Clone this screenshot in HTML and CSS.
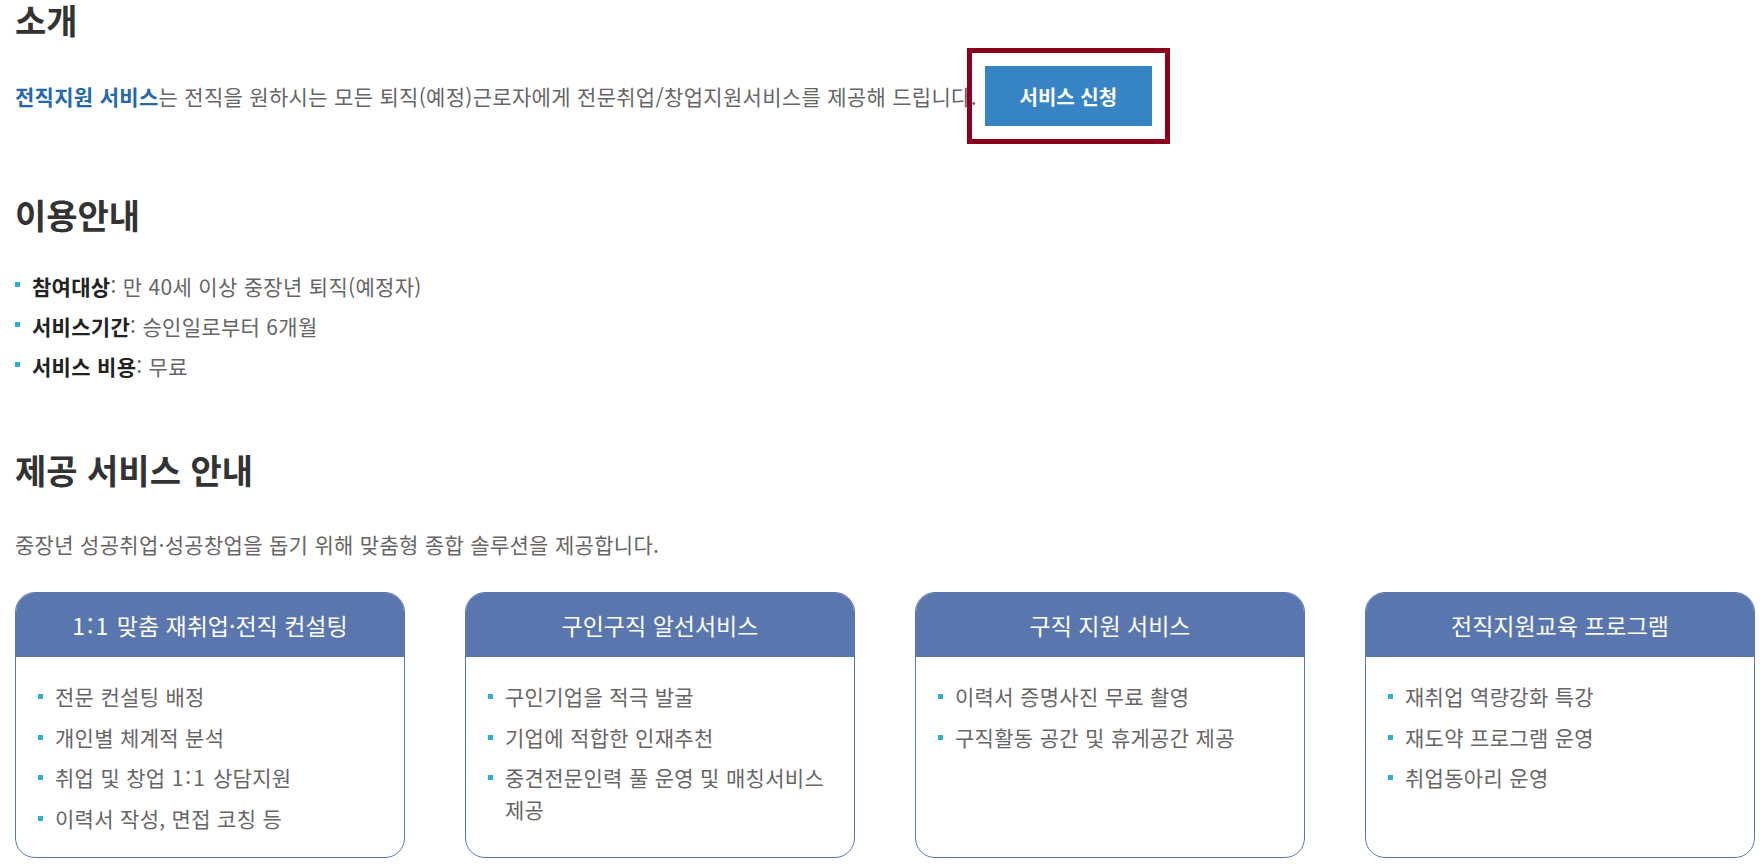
FILE: index.html
```html
<!DOCTYPE html>
<html lang="ko">
<head>
  <meta charset="UTF-8">
  <meta name="viewport" content="width=device-width, initial-scale=1.0">
  <title>전직지원 서비스</title>
  <link rel="stylesheet" href="styles.css">
</head>
<body>
  <div class="wrap">
    <section class="intro">
      <h2 class="title">소개</h2>
      <div class="intro-row">
        <p class="intro-text"><strong class="hl">전직지원 서비스</strong>는 전직을 원하시는 모든 퇴직(예정)근로자에게 전문취업/창업지원서비스를 제공해 드립니다.</p>
        <a class="apply-btn" href="#">서비스 신청</a>
      </div>
    </section>

    <section class="guide">
      <h2 class="title">이용안내</h2>
      <ul class="dot-list guide-list">
        <li><strong>참여대상</strong>: 만 40세 이상 중장년 퇴직(예정자)</li>
        <li><strong>서비스기간</strong>: 승인일로부터 6개월</li>
        <li><strong>서비스 비용</strong>: 무료</li>
      </ul>
    </section>

    <section class="services">
      <h2 class="title">제공 서비스 안내</h2>
      <p class="lead">중장년 성공취업·성공창업을 돕기 위해 맞춤형 종합 솔루션을 제공합니다.</p>
      <div class="card-grid">
        <div class="card">
          <h3 class="card-head"><span class="ratio">1:1</span> 맞춤 재취업·전직 컨설팅</h3>
          <ul class="dot-list card-list">
            <li>전문 컨설팅 배정</li>
            <li>개인별 체계적 분석</li>
            <li>취업 및 창업 <span class="ratio">1:1</span> 상담지원</li>
            <li>이력서 작성, 면접 코칭 등</li>
          </ul>
        </div>
        <div class="card">
          <h3 class="card-head">구인구직 알선서비스</h3>
          <ul class="dot-list card-list">
            <li>구인기업을 적극 발굴</li>
            <li>기업에 적합한 인재추천</li>
            <li>중견전문인력 풀 운영 및 매칭서비스 제공</li>
          </ul>
        </div>
        <div class="card">
          <h3 class="card-head">구직 지원 서비스</h3>
          <ul class="dot-list card-list">
            <li>이력서 증명사진 무료 촬영</li>
            <li>구직활동 공간 및 휴게공간 제공</li>
          </ul>
        </div>
        <div class="card">
          <h3 class="card-head">전직지원교육 프로그램</h3>
          <ul class="dot-list card-list">
            <li>재취업 역량강화 특강</li>
            <li>재도약 프로그램 운영</li>
            <li>취업동아리 운영</li>
          </ul>
        </div>
      </div>
    </section>
  </div>
</body>
</html>
```

FILE: styles.css
```css
body {
  margin: 0;
  font-family: "Noto Sans CJK KR", "Noto Sans", sans-serif;
  color: #666;
  background: #fff;
  word-break: keep-all;
}
.wrap {
  padding: 0 8px 0 15px;
}
.title {
  margin: 0;
  font-size: 34px;
  line-height: 40px;
  font-weight: 700;
  color: #333;
}
.intro-row {
  display: flex;
  align-items: center;
  gap: 8px;
  margin-top: 26px;
}
.intro-text {
  margin: 0;
  font-size: 21px;
  letter-spacing: 0.3px;
  line-height: 30px;
  color: #666;
}
.hl {
  color: #2468b0;
  font-weight: 700;
}
.apply-btn {
  display: flex;
  align-items: center;
  justify-content: center;
  width: 167px;
  height: 60px;
  flex-shrink: 0;
  background: #3784c5;
  color: #fff;
  font-size: 20px;
  font-weight: 700;
  text-decoration: none;
  outline: 5px solid #88001b;
  outline-offset: 13px;
}
.guide {
  margin-top: 69px;
}
.dot-list {
  list-style: none;
  margin: 0;
  padding: 0;
}
.dot-list li {
  position: relative;
  padding-left: 17px;
  font-size: 21px;
  letter-spacing: 0.3px;
}
.dot-list li::before {
  content: "";
  position: absolute;
  left: 0;
  width: 5px;
  height: 5px;
  background: #2eaed6;
}
.guide-list {
  margin-top: 31px;
}
.guide-list li {
  line-height: 40px;
}
.guide-list li::before {
  top: 16px;
}
.guide-list strong {
  color: #222;
  font-weight: 700;
}
.services {
  margin-top: 64px;
}
.lead {
  margin: 39px 0 0;
  font-size: 21px;
  letter-spacing: 0.3px;
  line-height: 30px;
}
.card-grid {
  display: grid;
  grid-template-columns: repeat(4, 1fr);
  gap: 60px;
  margin-top: 33px;
}
.card {
  border: 1px solid #5b76ad;
  border-radius: 20px;
  overflow: hidden;
}
.card-head {
  margin: 0;
  height: 64px;
  line-height: 64px;
  background: #5a76ae;
  color: #fff;
  font-size: 23px;
  font-weight: 400;
  text-align: center;
}
.ratio {
  letter-spacing: 2px;
}
.card-list {
  padding: 23px 20px 23px 22px;
}
.card-list li {
  line-height: 32px;
}
.card-list li + li {
  margin-top: 8.5px;
}
.card-list li::before {
  top: 14px;
}
```
